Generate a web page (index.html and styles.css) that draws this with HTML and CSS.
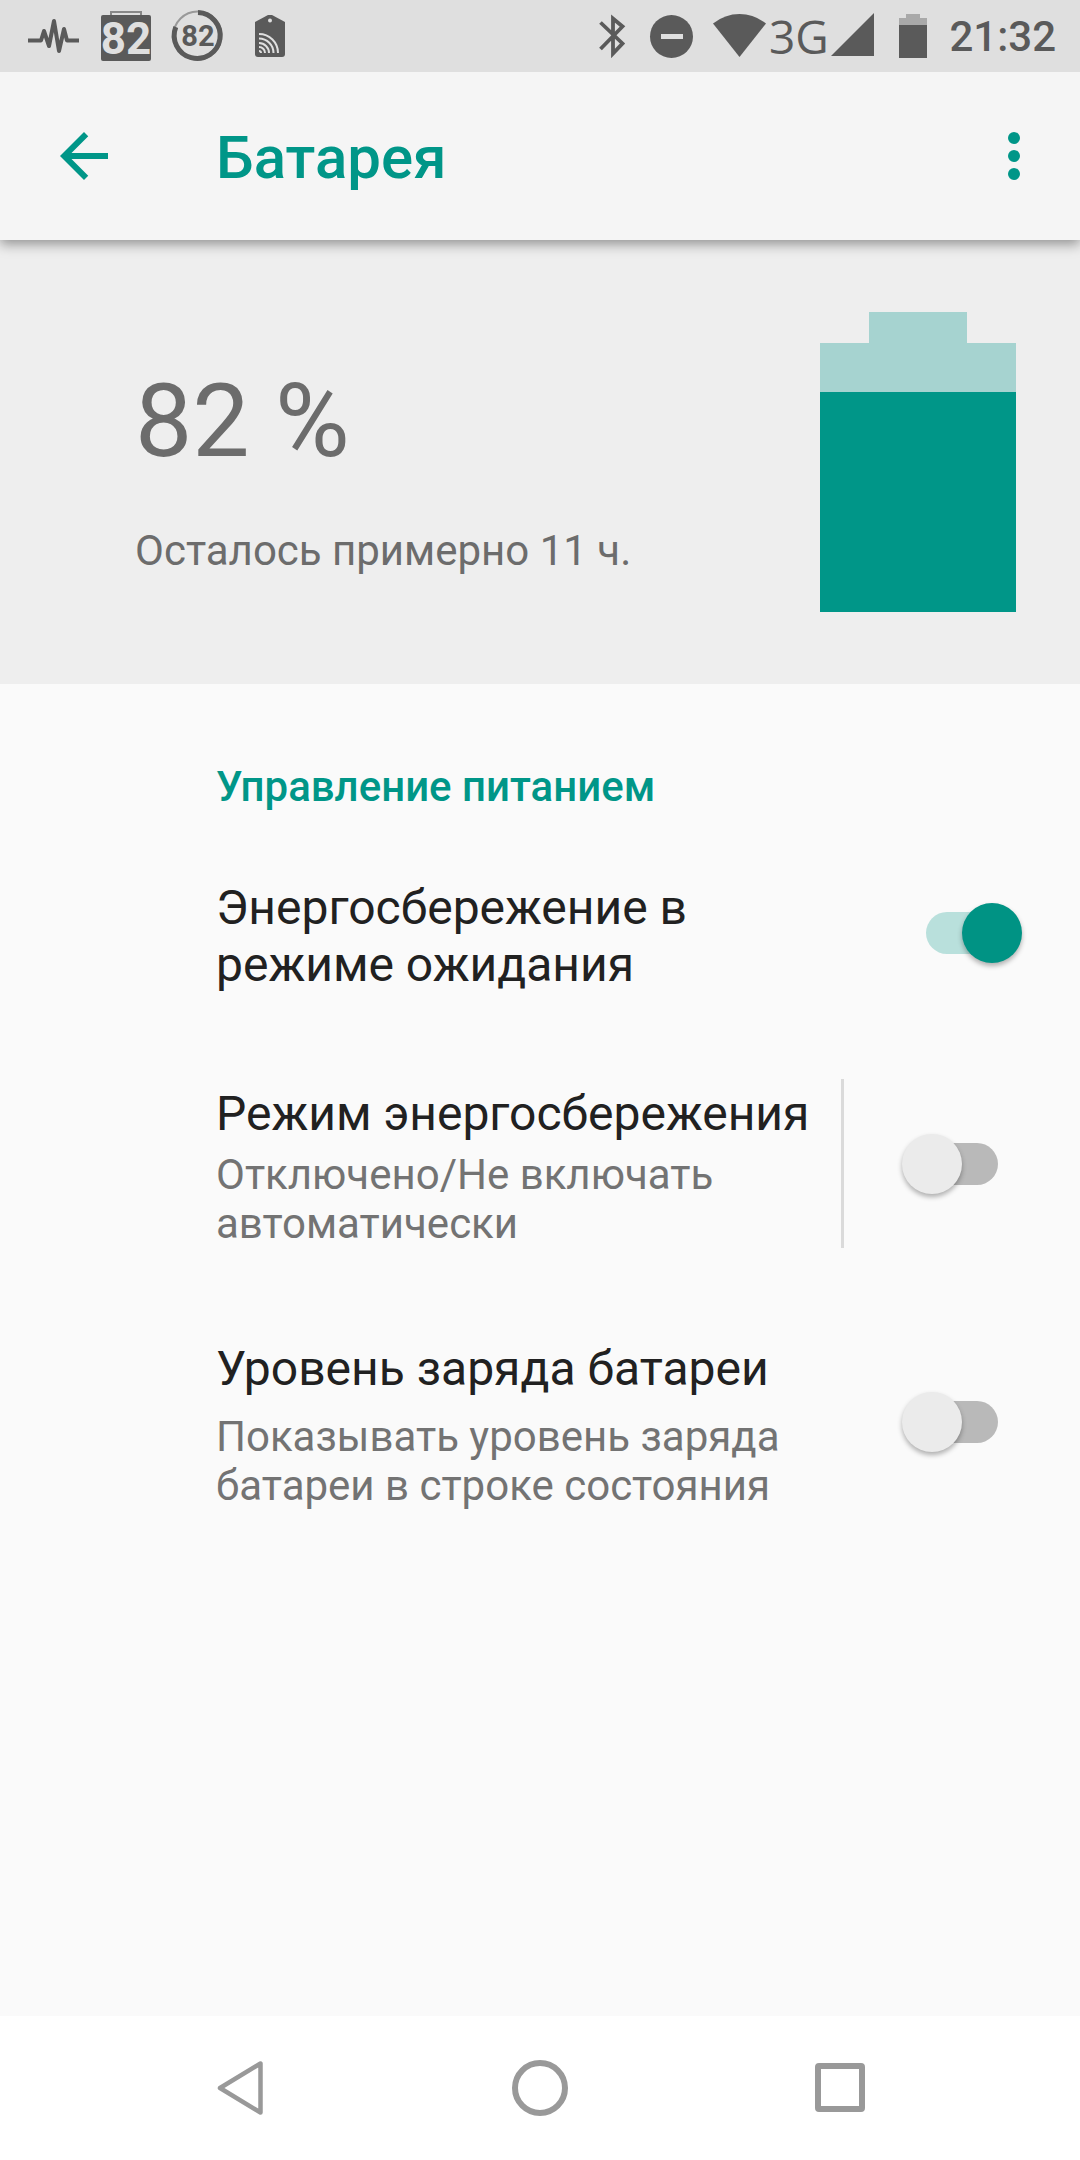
FILE: index.html
```html
<!DOCTYPE html>
<html lang="ru">
<head>
<meta charset="utf-8">
<meta name="viewport" content="width=device-width, initial-scale=1">
<title>Батарея</title>
<link rel="stylesheet" href="styles.css">
</head>
<body>
<div class="status-bar">
  <div class="status-group">
    <svg class="status-icon" viewBox="0 0 52 52" aria-hidden="true"><path d="M0 32.500H13L16 23L21 38L26 13L31 43L36 21L39 32.500H51" fill="none" stroke="currentColor" stroke-width="4" stroke-linejoin="round"/></svg>
    <svg class="status-icon" viewBox="0 0 52 52" aria-hidden="true"><path d="M11 8V4H41V8" fill="none" stroke="#888" stroke-width="2"/><rect x="1" y="7" width="50" height="46" rx="2" fill="currentColor"/><text class="icon-digits icon-digits-large" x="26" y="46" text-anchor="middle">82</text></svg>
    <svg class="status-icon" viewBox="0 0 52 52" aria-hidden="true"><circle cx="25.500" cy="27.500" r="24" fill="none" stroke="#999" stroke-width="2"/><path d="M26 4.500A23 23 0 1 1 3.800 19" fill="none" stroke="currentColor" stroke-width="5"/><text class="icon-digits icon-digits-small" x="26" y="38" text-anchor="middle">82</text></svg>
    <svg class="status-icon" viewBox="0 0 52 52" aria-hidden="true"><path d="M11 14L24 7H28L41 14V46Q41 49 38 49H14Q11 49 11 46Z" fill="currentColor"/><circle cx="26" cy="12.500" r="2" fill="#dfdfdf"/><path d="M15 26A19 19 0 0 1 34 45M15 30.500A14.500 14.500 0 0 1 29.500 45M15 35A10 10 0 0 1 25 45M15 39A6 6 0 0 1 21 45M15 43A2 2 0 0 1 17 45" fill="none" stroke="#dfdfdf" stroke-width="2"/></svg>
  </div>
  <div class="status-group">
    <svg width="30" height="44" viewBox="0 0 30 44" aria-hidden="true"><path d="M1.500 8.500L23.500 29.500L14 39.500V4.500L23.500 12.500L1.500 35" fill="none" stroke="currentColor" stroke-width="3.800"/></svg>
    <svg width="44" height="44" viewBox="0 0 44 44" aria-hidden="true"><circle cx="22.500" cy="22.500" r="21.500" fill="currentColor"/><rect x="12" y="20" width="22" height="5" fill="#dfdfdf"/></svg>
    <div class="signal">
      <svg width="53" height="44" viewBox="0 0 53 44" aria-hidden="true"><path d="M0 9.500Q12 0 26.500 0Q41 0 53 9.500L26.500 43Z" fill="currentColor"/></svg>
      <span class="network">3G</span>
      <svg width="48" height="46" viewBox="0 0 48 46" aria-hidden="true"><path d="M0 43H43V0Z" fill="currentColor"/></svg>
    </div>
    <svg width="30" height="44" viewBox="0 0 30 44" aria-hidden="true"><path d="M0 4H7V0H21V4H28V12H0Z" fill="#a9a9a9"/><path d="M0 11H28V44H0Z" fill="currentColor"/></svg>
    <time class="clock">21:32</time>
  </div>
</div>
<header class="app-bar">
  <button class="icon-button" type="button" aria-label="Назад"><svg width="72" height="72" viewBox="0 0 24 24"><path d="M20 11H7.830l5.590-5.590L12 4l-8 8 8 8 1.410-1.410L7.830 13H20z" fill="currentColor"/></svg></button>
  <h1 class="page-title">Батарея</h1>
  <button class="icon-button" type="button" aria-label="Ещё"><svg width="72" height="72" viewBox="0 0 24 24"><circle cx="12" cy="6" r="2" fill="currentColor"/><circle cx="12" cy="12" r="2" fill="currentColor"/><circle cx="12" cy="18" r="2" fill="currentColor"/></svg></button>
</header>
<section class="summary">
  <div class="summary-text">
    <p class="level">82&nbsp;%</p>
    <p class="remaining">Осталось примерно 11 ч.</p>
  </div>
  <svg width="196" height="300" viewBox="0 0 196 300" aria-hidden="true"><path d="M0 31H49V0H147V31H196V80H0Z" fill="#a6d3d0"/><path d="M0 80H196V300H0Z" fill="#009688"/></svg>
</section>
<main class="settings">
  <h2 class="category">Управление питанием</h2>
  <div class="rows">
    <div class="row">
      <label class="row-text" for="standby"><span class="row-title">Энергосбережение в режиме ожидания</span></label>
      <div class="row-side"><input class="switch" type="checkbox" id="standby" checked></div>
    </div>
    <div class="row">
      <label class="row-text row-text-compact" for="saver"><span class="row-title">Режим энергосбережения</span><span class="row-note">Отключено/Не включать автоматически</span></label>
      <div class="row-side row-side-divided"><input class="switch" type="checkbox" id="saver"></div>
    </div>
    <div class="row">
      <label class="row-text" for="percent"><span class="row-title">Уровень заряда батареи</span><span class="row-note">Показывать уровень заряда батареи в строке состояния</span></label>
      <div class="row-side"><input class="switch" type="checkbox" id="percent"></div>
    </div>
  </div>
</main>
<nav class="nav-bar">
  <button class="nav-button" type="button" aria-label="Назад"><svg width="60" height="60" viewBox="0 0 60 60"><path d="M50.500 5.500V54.500L10 30Z" fill="none" stroke="currentColor" stroke-width="4.500" stroke-linejoin="round"/></svg></button>
  <button class="nav-button" type="button" aria-label="Домой"><svg width="60" height="60" viewBox="0 0 60 60"><circle cx="30" cy="30" r="25" fill="none" stroke="currentColor" stroke-width="6"/></svg></button>
  <button class="nav-button" type="button" aria-label="Недавние"><svg width="60" height="60" viewBox="0 0 60 60"><rect x="8" y="8" width="44" height="43" rx="1" fill="none" stroke="currentColor" stroke-width="6" stroke-linejoin="round"/></svg></button>
</nav>
</body>
</html>
```
FILE: styles.css
```css
* {
  box-sizing: border-box;
}

body {
  margin: 0;
  min-height: 100vh;
  display: flex;
  flex-direction: column;
  background: #fafafa;
  color: #212121;
  font-family: Roboto, "Noto Sans", sans-serif;
  overflow-x: hidden;
}

h1, h2, p {
  margin: 0;
}

button {
  padding: 0;
  border: 0;
  background: none;
  color: inherit;
  font: inherit;
}

svg {
  display: block;
  flex: none;
}

.status-bar {
  position: relative;
  z-index: 2;
  display: flex;
  justify-content: space-between;
  height: 72px;
  padding: 0 24px 0 28px;
  background: #dfdfdf;
  color: #5a5a5a;
}

.status-group {
  display: flex;
  align-items: center;
  gap: 20px;
}

.status-icon {
  width: 52px;
  height: 52px;
  overflow: visible;
}

.status-group:first-child {
  padding-bottom: 4px;
}

.icon-digits {
  font-weight: 700;
}

.icon-digits-large {
  font-size: 44px;
  fill: #dfdfdf;
}

.icon-digits-small {
  font-size: 29px;
  fill: #5a5a5a;
}

.signal {
  display: flex;
  align-items: center;
}

.network {
  width: 65px;
  text-align: center;
  font-family: "Open Sans", sans-serif;
  font-size: 46px;
  line-height: 56px;
}

.clock {
  font-size: 42px;
  font-weight: 500;
  line-height: 49px;
}

.app-bar {
  position: relative;
  z-index: 1;
  display: flex;
  align-items: center;
  height: 168px;
  padding: 0 30px 0 48px;
  background: #f5f5f5;
  color: #009688;
  box-shadow: 0 4px 12px rgba(0, 0, 0, 0.4);
}

.page-title {
  flex: 1;
  padding: 4px 0 0 96px;
  font-size: 60px;
  font-weight: 500;
  line-height: 72px;
}

.summary {
  display: flex;
  justify-content: space-between;
  padding: 72px 64px 72px 135px;
  background: #eee;
  color: #6c6c6c;
}

.summary-text {
  display: grid;
  align-content: start;
  gap: 45px;
  padding-top: 49px;
}

.level {
  font-size: 102px;
  line-height: 120px;
}

.remaining {
  font-size: 42px;
  line-height: 49px;
}

.settings {
  flex: 1;
  padding: 78px 0 78px 216px;
}

.category {
  color: #009688;
  font-size: 42px;
  font-weight: 500;
  line-height: 49px;
}

.rows {
  display: grid;
  gap: 86px;
  padding-top: 62px;
}

.row {
  display: flex;
  align-items: center;
}

.row-text {
  flex: 1;
  display: grid;
  gap: 15px;
  padding: 6px 24px 0 0;
}

.row-text-compact {
  gap: 8px;
}

.row-title {
  font-size: 48px;
  line-height: 57px;
}

.row-note {
  color: #737373;
  font-size: 42px;
  line-height: 49px;
}

.row-side {
  align-self: stretch;
  display: flex;
  align-items: center;
  justify-content: flex-end;
  width: 239px;
  padding-right: 58px;
}

.row-side-divided {
  border-left: 3px solid #dadada;
}

.switch {
  appearance: none;
  display: grid;
  align-items: center;
  width: 120px;
  height: 60px;
  margin: 0;
}

.switch::before,
.switch::after {
  content: "";
  grid-area: 1 / 1;
}

.switch::before {
  justify-self: center;
  width: 72px;
  height: 42px;
  border-radius: 21px;
  background: #b9b9b9;
}

.switch::after {
  width: 60px;
  height: 60px;
  border-radius: 50%;
  background: #ebebeb;
  box-shadow: 0 3px 5px rgba(0, 0, 0, 0.3);
}

.switch:checked::before {
  background: #b9e0dc;
}

.switch:checked::after {
  justify-self: end;
  background: #009384;
}

.nav-bar {
  display: grid;
  grid-template-columns: repeat(3, 1fr);
  height: 144px;
  padding: 0 90px;
  background: #fff;
  color: #999;
}

.nav-button {
  display: flex;
  align-items: center;
  justify-content: center;
}
```
